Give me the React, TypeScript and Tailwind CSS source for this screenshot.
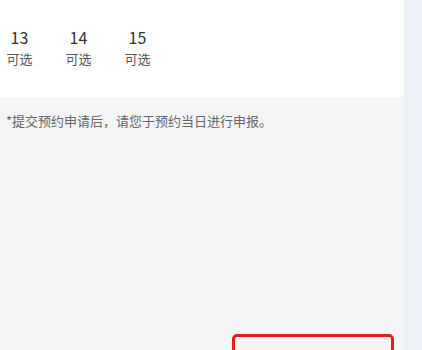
import React from 'react';

const days = [
  { day: '13', label: '可选' },
  { day: '14', label: '可选' },
  { day: '15', label: '可选' },
];

export default function App() {
  return (
    <div
      className="flex w-[422px] h-[350px] overflow-hidden bg-[#edf1f7]"
      style={{ fontFamily: '"PingFang SC", "Noto Sans CJK SC", sans-serif' }}
    >
      <div className="flex flex-col w-[404px] bg-[#f4f5f7]">
        {/* date row */}
        <div className="h-[97px] bg-white flex items-start pt-[26px]">
          {days.map((d) => (
            <div key={d.day} className="w-[59px] -ml-[11px] first:ml-[-10px] mr-[11px] flex flex-col items-center">
              <span className="text-[16px] leading-[22px] text-[#333]">{d.day}</span>
              <span className="text-[13px] leading-[20px] text-[#555] mt-[1px]">{d.label}</span>
            </div>
          ))}
        </div>

        <p className="mt-[14px] pl-[6px] text-[13px] leading-[20px] text-[#666]">
          *提交预约申请后，请您于预约当日进行申报。
        </p>

        <div className="flex-1" />

        <div className="flex justify-end pr-[10px]">
          <div className="w-[162px] h-[24px] mb-[-8px] border-[3px] border-[#e0201c] rounded-[5px]" />
        </div>
      </div>
    </div>
  );
}
